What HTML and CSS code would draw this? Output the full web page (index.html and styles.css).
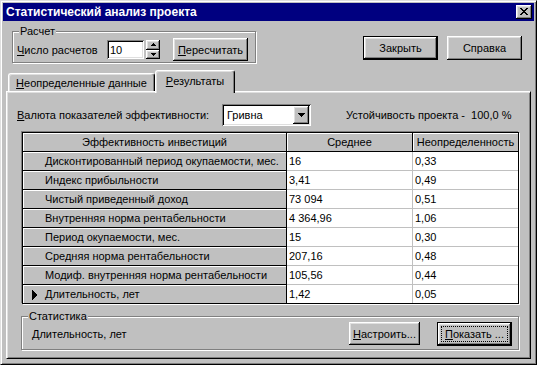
FILE: index.html
```html
<!DOCTYPE html>
<html lang="ru">
<head>
    <meta charset="UTF-8">
    <title>Статистический анализ проекта</title>
    <link rel="stylesheet" href="styles.css">
</head>
<body>
    <div class="window">
        <div class="titlebar">
            <span class="title">Статистический анализ проекта</span>
            <span class="btn close-btn">
                <svg width="8" height="7" viewBox="0 0 8 7" shape-rendering="crispEdges"><path d="M0 0h2v1H0zM6 0h2v1H6zM1 1h2v1H1zM5 1h2v1H5zM2 2h4v1H2zM3 3h2v1H3zM2 4h4v1H2zM1 5h2v1H1zM5 5h2v1H5zM0 6h2v1H0zM6 6h2v1H6z"/></svg>
            </span>
        </div>

        <div class="top-area">
            <!-- Расчет -->
            <div class="group calc-group">
                <span class="group-legend">Расчет</span>
                <span class="calc-label"><u>Ч</u>исло расчетов</span>
                <span class="field num-input">10</span>
                <span class="spin">
                    <span class="btn spin-btn"><svg width="5" height="3" viewBox="0 0 5 3" shape-rendering="crispEdges"><path d="M2 0h1v1H2zM1 1h3v1H1zM0 2h5v1H0z"/></svg></span>
                    <span class="btn spin-btn"><svg width="5" height="3" viewBox="0 0 5 3" shape-rendering="crispEdges"><path d="M0 0h5v1H0zM1 1h3v1H1zM2 2h1v1H2z"/></svg></span>
                </span>
                <span class="btn recalc-btn"><u>П</u>ересчитать</span>
            </div>

            <div class="top-buttons">
                <span class="btn default wide-btn">Закрыть</span>
                <span class="btn wide-btn">Справка</span>
            </div>
        </div>

        <div class="tabs">
            <span class="tab"><u>Н</u>еопределенные данные</span>
            <span class="tab active"><u>Р</u>езультаты</span>
        </div>

        <div class="panel">
            <div class="currency-row">
                <span class="currency-label"><u>В</u>алюта показателей эффективности:</span>
                <span class="field combo">
                    <span class="combo-text">Гривна</span>
                    <span class="btn combo-btn"><svg width="7" height="4" viewBox="0 0 7 4" shape-rendering="crispEdges"><path d="M0 0h7v1H0zM1 1h5v1H1zM2 2h3v1H2zM3 3h1v1H3z"/></svg></span>
                </span>
                <span class="stability">Устойчивость проекта -&nbsp; 100,0 %</span>
            </div>

            <table class="grid">
                <colgroup>
                    <col class="col-name">
                    <col class="col-mean">
                    <col class="col-unc">
                </colgroup>
                <tr>
                    <th class="fixed">Эффективность инвестиций</th>
                    <th class="fixed">Среднее</th>
                    <th class="fixed last-col">Неопределенность</th>
                </tr>
                <tr>
                    <td class="fixed name"><span class="marker"></span>Дисконтированный период окупаемости, мес.</td>
                    <td>16</td>
                    <td class="last-col">0,33</td>
                </tr>
                <tr>
                    <td class="fixed name"><span class="marker"></span>Индекс прибыльности</td>
                    <td>3,41</td>
                    <td class="last-col">0,49</td>
                </tr>
                <tr>
                    <td class="fixed name"><span class="marker"></span>Чистый приведенный доход</td>
                    <td>73 094</td>
                    <td class="last-col">0,51</td>
                </tr>
                <tr>
                    <td class="fixed name"><span class="marker"></span>Внутренняя норма рентабельности</td>
                    <td>4 364,96</td>
                    <td class="last-col">1,06</td>
                </tr>
                <tr>
                    <td class="fixed name"><span class="marker"></span>Период окупаемости, мес.</td>
                    <td>15</td>
                    <td class="last-col">0,30</td>
                </tr>
                <tr>
                    <td class="fixed name"><span class="marker"></span>Средняя норма рентабельности</td>
                    <td>207,16</td>
                    <td class="last-col">0,48</td>
                </tr>
                <tr>
                    <td class="fixed name"><span class="marker"></span>Модиф. внутренняя норма рентабельности</td>
                    <td>105,56</td>
                    <td class="last-col">0,44</td>
                </tr>
                <tr class="last-row">
                    <td class="fixed name"><span class="marker"><svg width="6" height="10" viewBox="0 0 6 10" shape-rendering="crispEdges"><path d="M0 0h1v10H0zM1 1h1v8H1zM2 2h1v6H2zM3 3h1v4H3zM4 4h1v2H4z"/></svg></span>Длительность, лет</td>
                    <td>1,42</td>
                    <td class="last-col">0,05</td>
                </tr>
            </table>

            <!-- Статистика -->
            <div class="group stat-group">
                <span class="group-legend">Статистика</span>
                <span class="stat-text">Длительность, лет</span>
                <span class="stat-buttons">
                    <span class="btn setup-btn"><u>Н</u>астроить...</span>
                    <span class="btn default show-btn"><span class="focus"><u>П</u>оказать ...</span></span>
                </span>
            </div>
        </div>
    </div>
</body>
</html>
```

FILE: styles.css
```css
body {
    margin: 0;
    font-family: "Liberation Sans", Arial, sans-serif;
    font-size: 11px;
    color: #000;
    background-color: #c0c0c0;
}

.window {
    width: 537px;
    height: 365px;
    box-sizing: border-box;
    border: 1px solid;
    border-color: #dfdfdf #000 #000 #dfdfdf;
    box-shadow: inset 1px 1px #fff, inset -1px -1px #808080;
    padding: 2px;
    display: flex;
    flex-direction: column;
    background-color: #c0c0c0;
}

/* заголовок окна */
.titlebar {
    height: 18px;
    flex-shrink: 0;
    background-color: #000080;
    color: #fff;
    display: flex;
    align-items: center;
    justify-content: space-between;
    padding: 0 2px 0 3px;
}
.title {
    font-weight: bold;
    font-size: 12px;
}

/* общий вид кнопки */
.btn {
    box-sizing: border-box;
    background-color: #c0c0c0;
    box-shadow: inset -1px -1px #000, inset 1px 1px #fff, inset -2px -2px #808080, inset 2px 2px #dfdfdf;
    display: flex;
    align-items: center;
    justify-content: center;
    flex-shrink: 0;
}
.btn.default {
    border: 1px solid #000;
}
.close-btn {
    width: 16px;
    height: 14px;
    padding-bottom: 1px;
}

/* поле ввода */
.field {
    box-sizing: border-box;
    background-color: #fff;
    box-shadow: inset 1px 1px #808080, inset -1px -1px #fff, inset 2px 2px #000, inset -2px -2px #dfdfdf;
}

/* рамка группы */
.group {
    position: relative;
    box-sizing: border-box;
    border: 1px solid #808080;
    box-shadow: inset 1px 1px #fff, 1px 1px #fff;
    display: flex;
    align-items: center;
}
.group-legend {
    position: absolute;
    top: -7px;
    left: 6px;
    padding: 0 1px;
    line-height: 13px;
    background-color: #c0c0c0;
}

.top-area {
    height: 49px;
    flex-shrink: 0;
    display: flex;
    align-items: flex-start;
}
.calc-group {
    margin: 10px 0 0 9px;
    width: 244px;
    height: 32px;
    padding: 5px 0 0 4px;
}
.calc-label {
    width: 90px;
}
.num-input {
    width: 37px;
    height: 19px;
    padding: 3px 0 0 3px;
    line-height: 14px;
}
.spin {
    margin-left: 2px;
    width: 14px;
    height: 19px;
    display: flex;
    flex-direction: column;
}
.spin-btn {
    flex: 1;
}
.recalc-btn {
    margin-left: 13px;
    width: 75px;
    height: 23px;
}
.top-buttons {
    margin: 15px 12px 0 auto;
    display: flex;
    gap: 9px;
}
.wide-btn {
    width: 75px;
    height: 24px;
}

/* вкладки */
.tabs {
    height: 21px;
    flex-shrink: 0;
    display: flex;
    align-items: flex-end;
    padding-left: 5px;
}
.tab {
    box-sizing: border-box;
    height: 18px;
    display: flex;
    align-items: center;
    justify-content: center;
    border-top: 1px solid #fff;
    border-left: 1px solid #fff;
    border-right: 1px solid #000;
    border-radius: 3px 3px 0 0;
    box-shadow: inset -1px 0 #808080, inset 1px 1px #dfdfdf;
    background-color: #c0c0c0;
}
.tab:first-child {
    width: 147px;
}
.tab.active {
    position: relative;
    z-index: 1;
    width: 80px;
    height: 23px;
    margin-bottom: -2px;
    padding-bottom: 2px;
}

.panel {
    flex: 1;
    margin: 0 3px 3px 3px;
    border: 1px solid;
    border-color: #fff #000 #000 #fff;
    box-shadow: inset 1px 1px #dfdfdf, inset -1px -1px #808080;
    padding: 12px 9px 0 10px;
}

.currency-row {
    height: 22px;
    display: flex;
    align-items: center;
}
.currency-label {
    width: 205px;
}
.combo {
    width: 89px;
    height: 22px;
    display: flex;
    align-items: center;
    padding: 2px;
}
.combo-text {
    flex: 1;
    padding-left: 3px;
}
.combo-btn {
    width: 16px;
    height: 18px;
}
.stability {
    margin-left: 35px;
}

/* таблица показателей */
.grid {
    margin: 6px 0 0 5px;
    width: 497px;
    table-layout: fixed;
    border-collapse: separate;
    border-spacing: 0;
    border: 1px solid #000;
    box-shadow: -1px -1px #808080, 1px 1px #fff;
    background-color: #fff;
}
.col-name {
    width: 264px;
}
.col-mean {
    width: 126px;
}
.grid th,
.grid td {
    padding: 0 2px;
    line-height: 18px;
    white-space: nowrap;
    overflow: hidden;
    font-weight: normal;
    text-align: left;
    border-right: 1px solid #c0c0c0;
    border-bottom: 1px solid #c0c0c0;
}
.grid th {
    text-align: center;
}
.grid .fixed {
    background-color: #c0c0c0;
    border-right-color: #000;
    border-bottom-color: #000;
    box-shadow: inset 1px 1px #fff;
}
.grid .name {
    padding-left: 9px;
}
.grid .last-col {
    border-right: none;
}
.last-row td {
    border-bottom: none;
}
.marker {
    display: inline-block;
    width: 13px;
    vertical-align: middle;
    line-height: 0;
}
.marker svg {
    display: block;
    margin-top: -1px;
}

.stat-group {
    margin: 12px 0 0 4px;
    width: 498px;
    height: 34px;
    padding: 2px 6px 0 10px;
}
.stat-buttons {
    margin-left: auto;
    display: flex;
    gap: 17px;
}
.setup-btn {
    width: 71px;
    height: 23px;
}
.show-btn {
    width: 75px;
    height: 24px;
    padding: 3px;
}
.focus {
    flex: 1;
    align-self: stretch;
    display: flex;
    align-items: center;
    justify-content: center;
    border: 1px dotted #000;
}
```
